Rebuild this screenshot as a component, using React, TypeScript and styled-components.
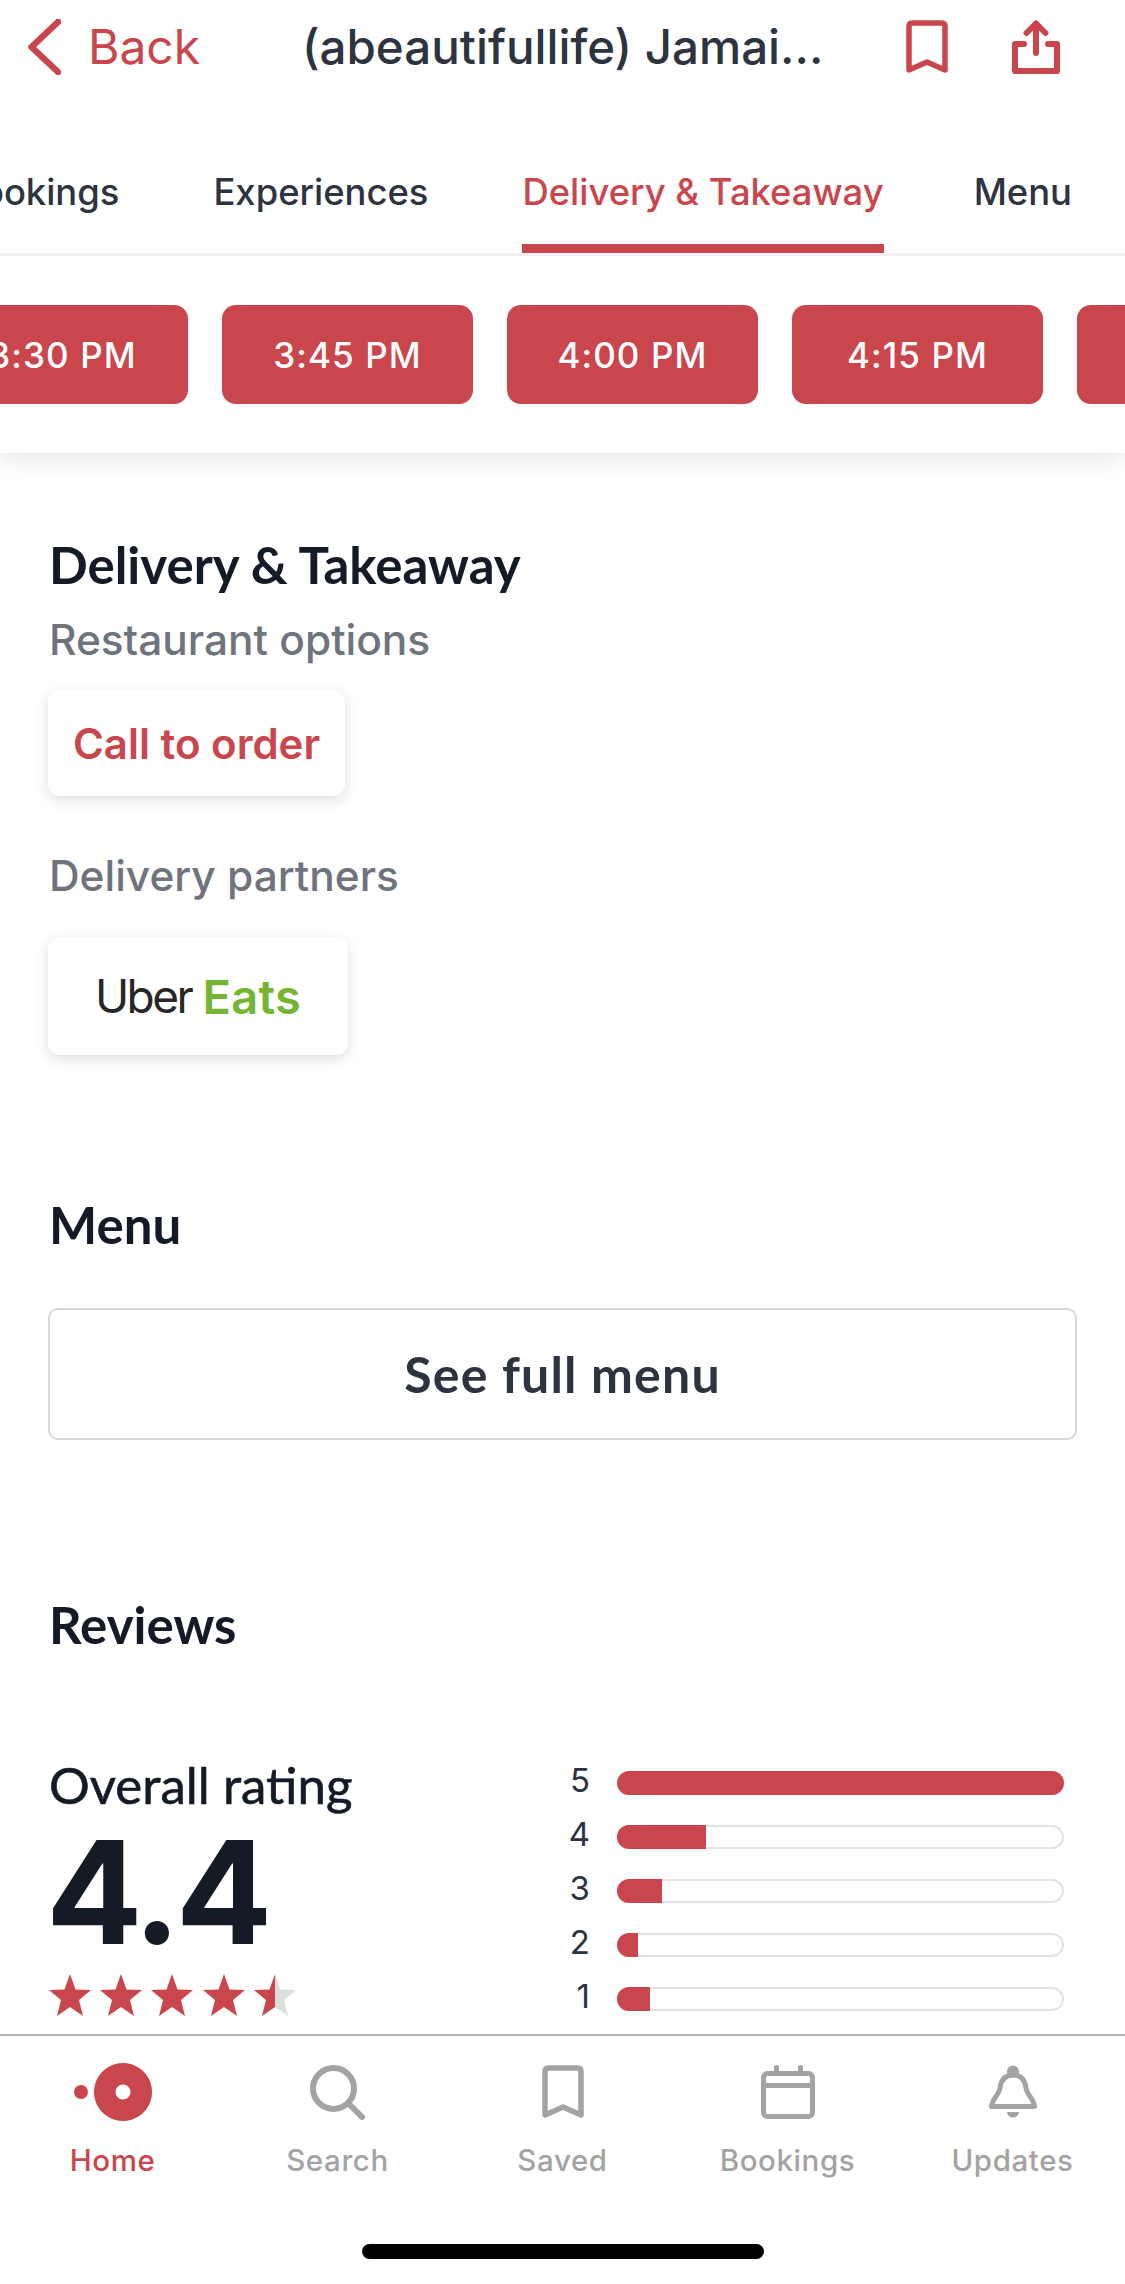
import React from "react";
import styled, { createGlobalStyle } from "styled-components";

const RED = "#c9464c";
const INK = "#2d333f";
const DARK = "#141a26";
const GREY = "#6f737b";
const MUTED = "#a3a3a3";

const GlobalStyle = createGlobalStyle`
  html, body { margin: 0; padding: 0; background: #fff; }
  * { box-sizing: border-box; }
`;

const Page = styled.div`
  width: 1125px;
  height: 2284px;
  display: flex;
  flex-direction: column;
  overflow: hidden;
  background: #fff;
  font-family: Inter, "Liberation Sans", sans-serif;
`;

const TopPanel = styled.div`
  flex: none;
  height: 453px;
  background: #fff;
  box-shadow: 0 6px 22px rgba(0, 0, 0, 0.1);
  position: relative;
  z-index: 2;
  display: flex;
  flex-direction: column;
`;

const Header = styled.div`
  height: 93px;
  display: flex;
  align-items: center;
  padding-left: 28px;
`;

const BackLink = styled.div`
  width: 274px;
  display: flex;
  align-items: center;
  gap: 27px;
  color: ${RED};
  font-size: 48px;
  font-weight: 400;
`;

const Title = styled.div`
  width: 604px;
  color: ${INK};
  font-size: 47.5px;
  font-weight: 500;
  white-space: nowrap;
`;

const HeaderIcons = styled.div`
  display: flex;
  align-items: center;
  gap: 64px;
`;

const Tabs = styled.div`
  height: 163px;
  padding-top: 60px;
  border-bottom: 3px solid #f1f1f3;
  display: flex;
  align-items: stretch;
  gap: 94px;
  overflow: hidden;
`;

const Tab = styled.div<{ $active?: boolean; $lead?: boolean }>`
  flex: none;
  height: 100%;
  padding-top: 17px;
  font-size: 36.4px;
  font-weight: 500;
  color: ${(p) => (p.$active ? RED : INK)};
  border-bottom: 9px solid ${(p) => (p.$active ? RED : "transparent")};
  margin-left: ${(p) => (p.$lead ? "-42px" : "0")};
  margin-right: ${(p) => (p.$active ? "-4px" : "0")};
`;

const Slots = styled.div`
  display: flex;
  gap: 34px;
  margin-top: 49px;
  margin-left: -63px;
`;

const Slot = styled.div`
  flex: none;
  width: 251px;
  height: 99px;
  background: ${RED};
  border-radius: 14px;
  color: #fff;
  font-size: 35px;
  letter-spacing: 1.1px;
  font-weight: 500;
  display: flex;
  align-items: center;
  justify-content: center;
`;

const Content = styled.div`
  flex: 1;
  min-height: 0;
  overflow: hidden;
  padding: 82px 48px 0 49px;
`;

const Heading = styled.h2<{ $top?: number }>`
  margin: ${(p) => p.$top ?? 0}px 0 0;
  font-family: Lato, "Liberation Sans", sans-serif;
  font-size: 51px;
  line-height: 60px;
  font-weight: 700;
  color: ${DARK};
`;

const SubHeading = styled.div<{ $top: number }>`
  margin-top: ${(p) => p.$top}px;
  font-size: 42.4px;
  line-height: 50px;
  font-weight: 500;
  color: ${GREY};
`;

const OptionCard = styled.div<{ $w: number; $h: number; $top: number }>`
  width: ${(p) => p.$w}px;
  height: ${(p) => p.$h}px;
  margin: ${(p) => p.$top}px 0 0 -1px;
  background: #fff;
  border-radius: 12px;
  box-shadow: 0 4px 14px rgba(0, 0, 0, 0.13);
  display: flex;
  align-items: center;
  justify-content: center;
`;

const CallText = styled.span`
  color: ${RED};
  font-size: 42px;
  font-weight: 600;
`;

const UberWord = styled.span`
  color: #262626;
  font-size: 46px;
  letter-spacing: -2.5px;
  margin-right: 11px;
`;

const EatsWord = styled.span`
  color: #75b531;
  font-size: 47px;
  font-weight: 600;
  letter-spacing: 0.3px;
`;

const OutlineButton = styled.div`
  width: 1029px;
  height: 132px;
  margin: 53px 0 0 -1px;
  border: 2px solid #d8d8da;
  border-radius: 10px;
  display: flex;
  align-items: center;
  justify-content: center;
  font-family: Lato, "Liberation Sans", sans-serif;
  font-size: 50px;
  font-weight: 700;
  letter-spacing: 1.2px;
  color: ${INK};
`;

const ReviewRow = styled.div`
  display: flex;
  justify-content: space-between;
  margin-top: 101px;
`;

const ScoreColumn = styled.div`
  display: flex;
  flex-direction: column;
`;

const ScoreLabel = styled.div`
  font-family: Lato, "Liberation Sans", sans-serif;
  font-size: 51px;
  line-height: 58px;
  font-weight: 400;
  -webkit-text-stroke: 0.6px ${DARK};
  color: ${DARK};
`;

const Score = styled.div`
  font-size: 143px;
  line-height: 132px;
  font-weight: 700;
  letter-spacing: -5px;
  color: ${DARK};
  margin: 12px 0 0 -3px;
`;

const Stars = styled.div`
  display: flex;
  gap: 9.2px;
  margin-top: 16px;
`;

const Bars = styled.div`
  width: 496px;
  margin: 12px 13px 0 0;
  display: flex;
  flex-direction: column;
  gap: 24px;
`;

const BarRow = styled.div`
  display: flex;
  align-items: center;
  gap: 27px;
  height: 30px;
`;

const BarDigit = styled.span`
  width: 22px;
  text-align: right;
  font-size: 33px;
  line-height: 30px;
  font-weight: 400;
  color: ${INK};
  transform: translateY(-3px);
`;

const BarTrack = styled.div`
  flex: 1;
  height: 24px;
  border-radius: 12px;
  overflow: hidden;
  background: #fff;
  box-shadow: inset 0 0 0 2px #e3e3e5;
`;

const BarFill = styled.div`
  height: 100%;
  background: ${RED};
`;

const BottomNav = styled.nav`
  flex: none;
  height: 250px;
  border-top: 2px solid #b5b5b5;
  background: #fff;
  position: relative;
  z-index: 2;
  display: flex;
  flex-direction: column;
`;

const NavItems = styled.div`
  display: grid;
  grid-template-columns: repeat(5, 225px);
  padding-top: 26px;
`;

const NavItem = styled.div<{ $active?: boolean }>`
  display: flex;
  flex-direction: column;
  align-items: center;
  gap: 20px;
  color: ${(p) => (p.$active ? RED : MUTED)};
  font-size: 29.5px;
  line-height: 36px;
  letter-spacing: 0.6px;
  font-weight: 500;
`;

const IconSlot = styled.div`
  width: 100px;
  height: 60px;
  display: flex;
  align-items: center;
  justify-content: center;
`;

const HomeBar = styled.div`
  width: 402px;
  height: 15px;
  border-radius: 8px;
  background: #000;
  margin: 66px auto 0;
`;

const BackIcon = () => (
  <svg width="33" height="56" viewBox="0 0 33 56" fill="none">
    <path d="M30 3 L3.5 28 L30 53" stroke={RED} strokeWidth="6.5" strokeLinecap="round" strokeLinejoin="round" />
  </svg>
);

const BookmarkIcon = ({ color }: { color: string }) => (
  <svg width="42" height="54" viewBox="0 0 42 54" fill="none">
    <path
      d="M3 6.5 Q3 3 6.5 3 H35.5 Q39 3 39 6.5 V50 L21 42 L3 50 Z"
      stroke={color}
      strokeWidth="5.5"
      strokeLinejoin="round"
    />
  </svg>
);

const ShareIcon = () => (
  <svg width="48" height="54" viewBox="0 0 48 54" fill="none" stroke={RED} strokeWidth="6" strokeLinecap="round" strokeLinejoin="round">
    <path d="M24 4 V33" />
    <path d="M14.5 13 L24 3.5 L33.5 13" />
    <path d="M12 24 H3 V51 H45 V24 H36" />
  </svg>
);

const HomeIcon = () => (
  <svg width="80" height="58" viewBox="0 0 80 58">
    <circle cx="8" cy="29" r="7" fill={RED} />
    <path
      fillRule="evenodd"
      d="M50 0 a29 29 0 1 0 0.01 0 Z M50 21.5 a7.5 7.5 0 1 1 -0.01 0 Z"
      fill={RED}
    />
  </svg>
);

const SearchIcon = () => (
  <svg width="55" height="55" viewBox="0 0 55 55" fill="none" stroke={MUTED} strokeWidth="6">
    <circle cx="23.5" cy="23.5" r="20.5" />
    <path d="M38 38 L52 52" strokeLinecap="round" />
  </svg>
);

const CalendarIcon = () => (
  <svg width="54" height="54" viewBox="0 0 54 54" fill="none" stroke={MUTED} strokeWidth="5">
    <rect x="2.5" y="8.5" width="49" height="43" rx="4" />
    <path d="M2.5 20.5 H51.5" />
    <path d="M15.5 2.5 V8 M39.5 2.5 V8" strokeLinecap="round" />
  </svg>
);

const BellIcon = () => (
  <svg width="50" height="54" viewBox="0 0 50 54" fill="none">
    <path
      d="M25 10 C17 10 13 15 12 23 C11 30 4 34 3.5 41.5 H46.5 C46 34 39 30 38 23 C37 15 33 10 25 10 Z"
      stroke={MUTED}
      strokeWidth="5"
      strokeLinejoin="round"
    />
    <circle cx="25" cy="6.5" r="6" fill={MUTED} />
    <path d="M19 47 H31 C30 54.5 20 54.5 19 47 Z" fill={MUTED} />
  </svg>
);

const StarIcon = ({ fill }: { fill: number }) => {
  const id = `star-${Math.round(fill * 100)}`;
  return (
    <svg width="42" height="42" viewBox="0 0 42 42">
      <defs>
        <linearGradient id={id}>
          <stop offset={fill} stopColor={RED} />
          <stop offset={fill} stopColor="#dedede" />
        </linearGradient>
      </defs>
      <path d="M21 0 L26.5 15.5 L42 16 L30 26 L34 42 L21 33 L8 42 L12 26 L0 16 L15.5 15.5 Z" fill={`url(#${id})`} />
    </svg>
  );
};

const slots = ["3:30 PM", "3:45 PM", "4:00 PM", "4:15 PM", "4:30 PM"];
const bars = [
  { n: 5, w: 100 },
  { n: 4, w: 20 },
  { n: 3, w: 10 },
  { n: 2, w: 4.6 },
  { n: 1, w: 7.3 },
];

export default function App() {
  return (
    <Page>
      <GlobalStyle />
      <TopPanel>
        <Header>
          <BackLink>
            <BackIcon />
            Back
          </BackLink>
          <Title>(abeautifullife) Jamai...</Title>
          <HeaderIcons>
            <BookmarkIcon color={RED} />
            <ShareIcon />
          </HeaderIcons>
        </Header>
        <Tabs>
          <Tab $lead>Bookings</Tab>
          <Tab>Experiences</Tab>
          <Tab $active>Delivery &amp; Takeaway</Tab>
          <Tab>Menu</Tab>
        </Tabs>
        <Slots>
          {slots.map((s) => (
            <Slot key={s}>{s}</Slot>
          ))}
        </Slots>
      </TopPanel>
      <Content>
        <Heading>Delivery &amp; Takeaway</Heading>
        <SubHeading $top={20}>Restaurant options</SubHeading>
        <OptionCard $w={297} $h={106} $top={25}>
          <CallText>Call to order</CallText>
        </OptionCard>
        <SubHeading $top={55}>Delivery partners</SubHeading>
        <OptionCard $w={300} $h={118} $top={36}>
          <UberWord>Uber</UberWord>
          <EatsWord>Eats</EatsWord>
        </OptionCard>
        <Heading $top={140}>Menu</Heading>
        <OutlineButton>See full menu</OutlineButton>
        <Heading $top={155}>Reviews</Heading>
        <ReviewRow>
          <ScoreColumn>
            <ScoreLabel>Overall rating</ScoreLabel>
            <Score>4.4</Score>
            <Stars>
              <StarIcon fill={1} />
              <StarIcon fill={1} />
              <StarIcon fill={1} />
              <StarIcon fill={1} />
              <StarIcon fill={0.5} />
            </Stars>
          </ScoreColumn>
          <Bars>
            {bars.map((b) => (
              <BarRow key={b.n}>
                <BarDigit>{b.n}</BarDigit>
                <BarTrack>
                  <BarFill style={{ width: `${b.w}%` }} />
                </BarTrack>
              </BarRow>
            ))}
          </Bars>
        </ReviewRow>
      </Content>
      <BottomNav>
        <NavItems>
          <NavItem $active>
            <IconSlot>
              <HomeIcon />
            </IconSlot>
            Home
          </NavItem>
          <NavItem>
            <IconSlot>
              <SearchIcon />
            </IconSlot>
            Search
          </NavItem>
          <NavItem>
            <IconSlot>
              <BookmarkIcon color={MUTED} />
            </IconSlot>
            Saved
          </NavItem>
          <NavItem>
            <IconSlot>
              <CalendarIcon />
            </IconSlot>
            Bookings
          </NavItem>
          <NavItem>
            <IconSlot>
              <BellIcon />
            </IconSlot>
            Updates
          </NavItem>
        </NavItems>
        <HomeBar />
      </BottomNav>
    </Page>
  );
}
